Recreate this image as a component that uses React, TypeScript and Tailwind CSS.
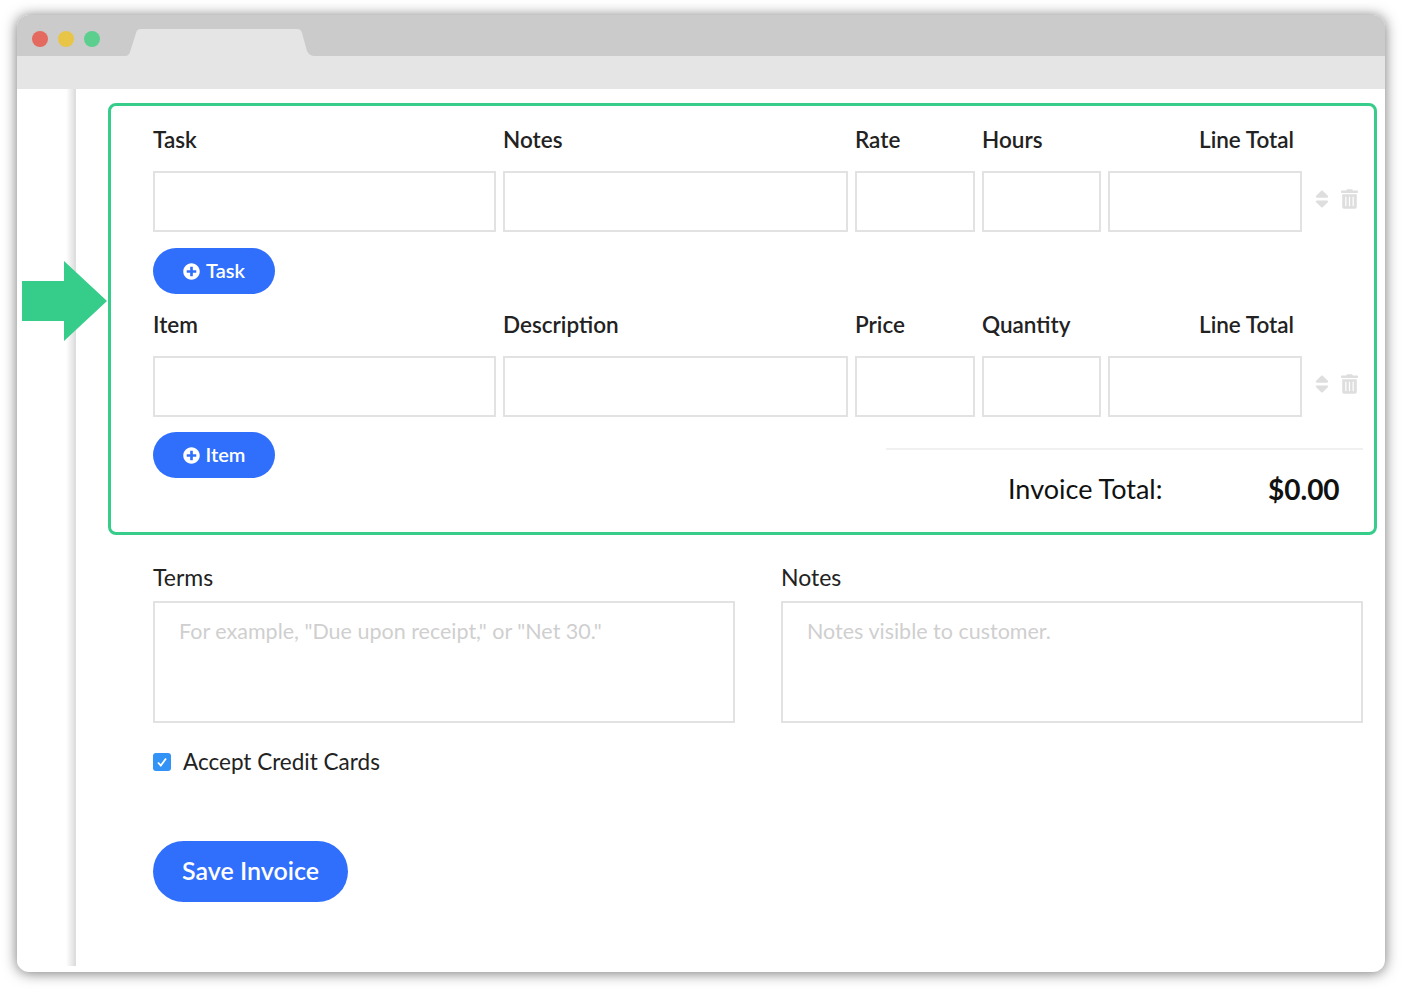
import { FaPlusCircle, FaSort, FaTrashAlt } from 'react-icons/fa'

const font = "font-['Lato','Liberation_Sans',sans-serif]"

function LineRow({ labels }: { labels: string[] }) {
  return (
    <div>
      <div className="grid grid-cols-[343px_345px_120px_119px_194px] gap-x-[7px] h-[34px] text-[22.5px] leading-[36px] font-semibold text-[#222]">
        <div>{labels[0]}</div>
        <div>{labels[1]}</div>
        <div>{labels[2]}</div>
        <div>{labels[3]}</div>
        <div className="text-right pr-2">{labels[4]}</div>
      </div>
      <div className="flex mt-[15px] items-center">
        <div className="grid grid-cols-[343px_345px_120px_119px_194px] gap-x-[7px]">
          <div className="h-[61px] border-2 border-[#e2e2e2]" />
          <div className="h-[61px] border-2 border-[#e2e2e2]" />
          <div className="h-[61px] border-2 border-[#e2e2e2]" />
          <div className="h-[61px] border-2 border-[#e2e2e2]" />
          <div className="h-[61px] border-2 border-[#e2e2e2]" />
        </div>
        <FaSort className="ml-[13px] mb-[6px] w-[14px] h-[22px] text-[#dedede]" />
        <FaTrashAlt className="ml-[12px] mb-[6px] w-[17px] h-[20px] text-[#dedede]" />
      </div>
    </div>
  )
}

function AddButton({ label }: { label: string }) {
  return (
    <div className="w-[122px] h-[46px] rounded-full bg-[#306ffb] text-white flex items-center justify-center gap-[6px] text-[20px] font-semibold">
      <FaPlusCircle className="w-[17px] h-[17px]" />
      <span className="pb-[3px]">{label}</span>
    </div>
  )
}

export default function App() {
  return (
    <div className={`relative w-[1401px] h-[989px] bg-white pl-[17px] pt-[15px] ${font}`}>
      <div className="w-[1368px] h-[957px] rounded-[12px] bg-white overflow-hidden shadow-[0_1px_14px_rgba(0,0,0,0.55)] flex flex-col">
        {/* browser chrome */}
        <div className="h-[41px] bg-[#cbcbcb] flex relative shrink-0">
          <div className="flex gap-[10px] pl-[15px] pt-[16px]">
            <div className="w-4 h-4 rounded-full bg-[#e4695f]" />
            <div className="w-4 h-4 rounded-full bg-[#e8c547]" />
            <div className="w-4 h-4 rounded-full bg-[#5ccf8e]" />
          </div>
          <svg className="absolute left-[108px] top-[14px]" width="190" height="27" viewBox="0 0 190 27">
            <path d="M0 27 Q4 27 5 23 L11 4 Q12 0 16 0 L172 0 Q176 0 177 4 L182 22 Q184 27 190 27 Z" fill="#e5e5e5" />
          </svg>
        </div>
        <div className="h-[33px] bg-[#e5e5e5] shrink-0" />

        <div className="flex flex-1 min-h-0">
          <div className="w-[59px] h-[877px] shrink-0 bg-gradient-to-r from-white from-[86%] to-[#e2e2e2] border-r-2 border-[#dedede]" />
          <div className="flex-1 pt-[14px]">
            {/* highlighted line items */}
            <div className="ml-[32px] w-[1269px] h-[432px] border-[3px] border-[#36cd8b] rounded-[8px] pl-[42px] pt-[16px] pr-[11px]">
              <LineRow labels={['Task', 'Notes', 'Rate', 'Hours', 'Line Total']} />
              <div className="mt-[16px]">
                <AddButton label="Task" />
              </div>
              <div className="mt-[13px]">
                <LineRow labels={['Item', 'Description', 'Price', 'Quantity', 'Line Total']} />
              </div>
              <div className="flex justify-between mt-[15px]">
                <AddButton label="Item" />
                <div className="w-[477px] mt-[16px] border-t-2 border-[#f0f0f0] flex pt-[22px] pl-[122px] text-[27px] leading-[34px] text-[#111]">
                  <div className="w-[260px]">Invoice Total:</div>
                  <div className="font-bold text-[28px]">$0.00</div>
                </div>
              </div>
            </div>

            <div className="pl-[77px] pr-[22px]">
              <div className="flex gap-[46px] mt-[25px]">
                <div className="w-[582px]">
                  <div className="text-[23px] leading-[34px] text-[#222]">Terms</div>
                  <div className="mt-[7px] h-[122px] border-2 border-[#e2e2e2] pl-[24px] pt-[12px] text-[21.5px] leading-[32px] text-[#cfcfcf]">
                    For example, "Due upon receipt," or "Net 30."
                  </div>
                </div>
                <div className="w-[582px]">
                  <div className="text-[23px] leading-[34px] text-[#222]">Notes</div>
                  <div className="mt-[7px] h-[122px] border-2 border-[#e2e2e2] pl-[24px] pt-[12px] text-[21.5px] leading-[32px] text-[#cfcfcf]">
                    Notes visible to customer.
                  </div>
                </div>
              </div>
              <div className="flex items-center mt-[22px] h-[34px]">
                <div className="w-[18px] h-[18px] rounded-[3px] bg-[#3392f6] flex items-center justify-center">
                  <svg width="12" height="12" viewBox="0 0 12 12" fill="none">
                    <path d="M2 6.5 L4.8 9.5 L10 2.5" stroke="#fff" strokeWidth="1.8" />
                  </svg>
                </div>
                <div className="ml-3 text-[22.5px] text-[#222]">Accept Credit Cards</div>
              </div>
              <div className="mt-[62px] w-[195px] h-[61px] rounded-full bg-[#306ffb] text-white flex items-center justify-center text-[25px] font-semibold">
                <span className="pb-[2px]">Save Invoice</span>
              </div>
            </div>
          </div>
        </div>
      </div>

      {/* arrow pointing at the highlighted box */}
      <svg className="absolute left-[22px] top-[261px]" width="86" height="80" viewBox="0 0 86 80">
        <path d="M0 20 H42 V0 L85 40 L42 80 V60 H0 Z" fill="#36cd8b" />
      </svg>
    </div>
  )
}
